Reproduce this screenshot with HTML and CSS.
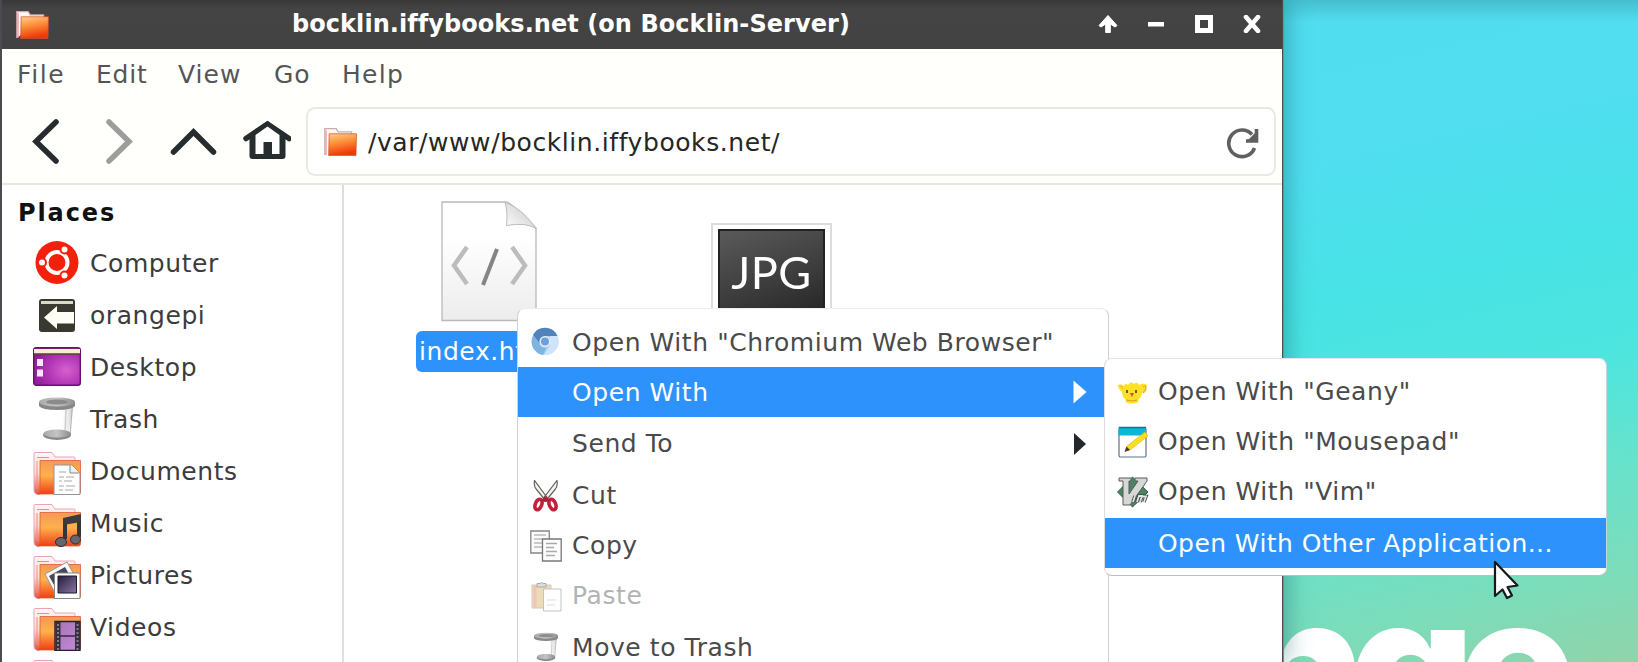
FILE: index.html
```
<!DOCTYPE html>
<html lang="en">
<head>
<meta charset="utf-8">
<title>bocklin.iffybooks.net (on Bocklin-Server)</title>
<link rel="stylesheet" href="styles.css">
</head>
<body>
<svg class="defs" width="0" height="0" aria-hidden="true">
  <defs>
    <linearGradient id="orange" x1="0" y1="0" x2="0.25" y2="1"><stop offset="0" stop-color="#ffd18a"/><stop offset=".5" stop-color="#fb8a35"/><stop offset="1" stop-color="#ee3a0a"/></linearGradient>
    <linearGradient id="orangeWide" x1="0" y1="0" x2="0" y2="1"><stop offset="0" stop-color="#f39a55"/><stop offset=".45" stop-color="#ffb04c"/><stop offset="1" stop-color="#ef3f16"/></linearGradient>
    <linearGradient id="folderBack" x1="0" y1="0" x2="0" y2="1"><stop offset="0" stop-color="#fff6f4"/><stop offset=".5" stop-color="#fbd8d8"/><stop offset="1" stop-color="#e2503f"/></linearGradient>
    <radialGradient id="purple" cx=".7" cy=".6" r=".8"><stop offset="0" stop-color="#d660cf"/><stop offset=".5" stop-color="#b035b5"/><stop offset="1" stop-color="#86188f"/></radialGradient>
    <linearGradient id="page" x1="0" y1="0" x2="0" y2="1"><stop offset=".3" stop-color="#fff"/><stop offset="1" stop-color="#ececec"/></linearGradient>
    <linearGradient id="curl" x1="0" y1="1" x2=".7" y2=".3"><stop offset="0" stop-color="#fff"/><stop offset="1" stop-color="#d4d4d4"/></linearGradient>
    <linearGradient id="metal" x1="0" y1="0" x2="1" y2="0"><stop offset="0" stop-color="#aaa"/><stop offset=".5" stop-color="#c4c4c4"/><stop offset="1" stop-color="#8d8d8d"/></linearGradient>
    <linearGradient id="glass" x1="0" y1="0" x2="1" y2="0"><stop offset="0" stop-color="#fff"/><stop offset=".6" stop-color="#fff"/><stop offset=".85" stop-color="#e8e8e8"/><stop offset="1" stop-color="#c4c4c4"/></linearGradient>
    <linearGradient id="film" x1="0" y1="0" x2="1" y2="1"><stop offset="0" stop-color="#a873b4"/><stop offset="1" stop-color="#c28ad8"/></linearGradient>
    <linearGradient id="photo" x1="0" y1="0" x2="1" y2="1"><stop offset="0" stop-color="#251c3c"/><stop offset="1" stop-color="#8b77a5"/></linearGradient>
    <symbol id="folder-small" viewBox="0 0 32 28">
      <path d="M.8 27V1.500h11l2 3.200h13V8" fill="#fff8f6" stroke="#cfa9a9" stroke-width="1.200"/>
      <path d="M2 27V3" stroke="#e88a8a" stroke-width="1"/>
      <path d="M5 6.500h26.500L31 27.500H4.500z" fill="url(#orange)" stroke="#d3502a" stroke-width=".7"/>
    </symbol>
    <symbol id="folder" viewBox="0 0 48 44">
      <path d="M1 38V1.500q0-1 1-1h17l3 4.500h19q1 0 1 1V10L6 42.500q-5 0-5-4.500z" fill="url(#folderBack)" stroke="#e5a7b8" stroke-width="1"/>
      <path d="M4 5.500h12M4 9v28" stroke="#f58f70" stroke-width="1" fill="none"/>
      <path d="M7 8.500h40.500V40q0 2-2 2H4q3-1 3-5z" fill="url(#orangeWide)" stroke="#df5a33" stroke-width=".8"/>
    </symbol>
    <symbol id="trash" viewBox="0 0 36 44">
      <path d="M9 8l-2 31h22L34 8z" fill="url(#glass)"/>
      <path d="M33.500 9L31 38" stroke="#b4b4b4" stroke-width="1.200"/>
      <path d="M27 12l-1 24" stroke="#d0d0d0" stroke-width="1.500"/>
      <ellipse cx="18" cy="38" rx="14" ry="5" fill="#888"/><ellipse cx="18" cy="36.500" rx="13.500" ry="4" fill="url(#metal)"/>
      <path d="M0 5h36v4q-3 4-18 4T0 9z" fill="#878787"/><ellipse cx="18" cy="5" rx="18" ry="4.500" fill="url(#metal)"/><ellipse cx="18" cy="5" rx="11" ry="2.500" fill="#8b8b8b"/>
    </symbol>
  </defs>
</svg>

<div class="desktop">
  <svg class="wallpaper-word" viewBox="0 0 356 60"><text x="-43 66 175" y="137">nge</text></svg>

  <main class="window">
    <header class="titlebar">
      <svg class="title-icon" viewBox="0 0 32 28"><use href="#folder-small"/></svg>
      <h1 class="title">bocklin.iffybooks.net (on Bocklin-Server)</h1>
      <div class="controls">
        <svg viewBox="0 0 20 18"><path d="M10 .5L19 10.500L17 12L12.300 9V17.500H7.700V9L3 12L1 10.500z" fill="#fff" stroke="#fff" stroke-linejoin="round"/></svg>
        <svg viewBox="0 0 20 18"><path d="M2 7h16v4.500H2z" fill="#fff"/></svg>
        <svg viewBox="0 0 20 18"><path d="M3.500 2.500h13v13h-13z" fill="none" stroke="#fff" stroke-width="5"/></svg>
        <svg viewBox="0 0 20 18"><path d="M4 2l12 14M16 2L4 16" fill="none" stroke="#fff" stroke-width="4.600" stroke-linecap="round"/></svg>
      </div>
    </header>

    <nav class="menubar"><span>File</span><span>Edit</span><span>View</span><span>Go</span><span>Help</span></nav>

    <div class="toolbar">
      <svg class="tool" viewBox="0 0 48 48"><path d="M33 5L13 24.500L33 44" class="chev"/></svg>
      <svg class="tool" viewBox="0 0 48 48"><path d="M12 5L32 24.500L12 44" class="chev chev-off"/></svg>
      <svg class="tool" viewBox="0 0 48 48"><path d="M4.500 35L24.500 15L44.500 35" class="chev"/></svg>
      <svg class="tool" viewBox="0 0 48 48"><path d="M3 21.500L24.500 7L46 21.500" fill="none" stroke="#272c2e" stroke-width="5.500" stroke-linecap="round"/><path d="M6.500 17L24.500 4l18 13v22q0 3-3 3h-30q-3 0-3-3z" fill="#272c2e"/><path d="M12.500 18L24.500 9.500l12 8.500v19h-7.500V25h-8.500v12h-8z" fill="#fff"/></svg>
      <div class="pathbar">
        <svg class="path-icon" viewBox="0 0 32 28"><use href="#folder-small"/></svg>
        <span>/var/www/bocklin.iffybooks.net/</span>
        <svg class="reload" viewBox="0 0 34 34"><path d="M27 9.500A13.300 13.300 0 1 0 29.500 23" fill="none" stroke="#606060" stroke-width="3.600"/><path d="M31.500 4v12H21" fill="none" stroke="#606060" stroke-width="3.600"/><path d="M30 15V8l-7 7z" fill="#606060"/></svg>
      </div>
    </div>

    <div class="content">
      <aside class="sidebar">
        <h2>Places</h2>
        <ul>
          <li><svg viewBox="0 0 48 48"><circle cx="24" cy="23.500" r="21.500" fill="#f5200c"/><g fill="none" stroke="#fff" stroke-width="4"><circle cx="24" cy="23.500" r="10.500"/></g><g stroke="#f5200c" stroke-width="2"><circle cx="9" cy="23.500" r="4" fill="#fff"/><circle cx="31.500" cy="10.500" r="4" fill="#fff"/><circle cx="31.500" cy="36.500" r="4" fill="#fff"/></g></svg>Computer</li>
          <li><svg viewBox="0 0 48 48"><rect x="6" y="8" width="36" height="33" rx="3" fill="#393932"/><path d="M8 10h32v3H8z" fill="#d9d9c8"/><path d="M11 26.500L24 15v6h17v11.500H24V38z" fill="#fffef4"/></svg>orangepi</li>
          <li><svg viewBox="0 0 48 48"><rect x=".7" y="4.700" width="46.600" height="37.600" rx="2.500" fill="url(#purple)" stroke="#65136c" stroke-width="1.400"/><path d="M1 6h46v5H1z" fill="#f4f0cc"/><path d="M1 11h46" stroke="#52472e" stroke-width="1.400"/><path d="M4 16h6v7H4zM4 26.500h6v7H4z" fill="#fbe8ff"/></svg>Desktop</li>
          <li><svg viewBox="-6 -2 48 48"><use href="#trash" width="36" height="44"/></svg>Trash</li>
          <li><svg viewBox="0 -5 48 48"><use href="#folder" width="48" height="44"/><path d="M21 13h18l8 8v21.500H21z" fill="#fdfdfd" stroke="#949494"/><path d="M37 13v8h9" fill="#eee" stroke="#888"/><path d="M26 20h7M26 25h5M33 25h8M26 29h3M31 29h8M26 34h5M33 34h9M26 38h4M32 38h8" stroke="#aaa" stroke-width="1"/></svg>Documents</li>
          <li><svg viewBox="0 -5 48 48"><use href="#folder" width="48" height="44"/><path d="M32 15v20M46 12v21" stroke="#34343b" stroke-width="4"/><path d="M30 14l18-4v8l-18 3z" fill="#3b3b40"/><ellipse cx="28" cy="38" rx="5.500" ry="4.500" fill="#65656b" stroke="#2d2d31"/><ellipse cx="42.500" cy="35.500" rx="5" ry="4.500" fill="#65656b" stroke="#2d2d31"/></svg>Music</li>
          <li><svg viewBox="0 -5 48 48"><use href="#folder" width="48" height="44"/><path d="M12 18L34 6l10 18-22 13z" fill="#f8f8f8" stroke="#999"/><path d="M16 20L32 11l5 9-16 9z" fill="#47495a"/><path d="M21.500 17H47v25.500H21.500z" fill="#fff" stroke="#888"/><path d="M25 20h18.500v17H25z" fill="url(#photo)" stroke="#1e1b2b" stroke-width="1"/></svg>Pictures</li>
          <li><svg viewBox="0 -5 48 48"><use href="#folder" width="48" height="44"/><path d="M22 13.500h25v29H22z" fill="url(#film)" stroke="#25202b" stroke-width="1.400"/><path d="M25 14v28M44.500 14v28" stroke="#35303b" stroke-width="5"/><path d="M25 16v26M44.500 16v26" stroke="#857a90" stroke-width="2" stroke-dasharray="2 2"/><path d="M27 28h15" stroke="#352b40" stroke-width="1.500"/></svg>Videos</li>
          <li><svg viewBox="0 -5 48 48"><use href="#folder" width="48" height="44"/></svg></li>
        </ul>
      </aside>

      <section class="files">
        <figure class="file">
          <svg class="html-icon" viewBox="0 0 97 121"><path d="M1 1h64q5 0 30 26v92.500H1z" fill="url(#page)" stroke="#b9b9b9" stroke-width="1.300"/><path d="M64 1q3 10 1.500 23.500Q85 21 95 27.500Q82 8 64 1z" fill="url(#curl)" stroke="#bbb" stroke-width="1"/><path d="M26 46L13 64.500L26 83M71 46L84 64.500L71 83" fill="none" stroke="#bcbcbc" stroke-width="4.500"/><path d="M56 48L42 84" stroke="#858585" stroke-width="4"/></svg>
          <figcaption class="selected">index.html</figcaption>
        </figure>
        <figure class="picture"><div class="jpg"><span>JPG</span></div></figure>
      </section>
    </div>
  </main>

  <ul class="menu context">
    <li><svg viewBox="0 0 32 32"><circle cx="15" cy="15.500" r="13.500" fill="#a7cdf0"/><path d="M3 9A13.500 13.500 0 0 1 27.500 10H15.500A6 6 0 0 0 10 18z" fill="#5083bb"/><path d="M3.500 9L10 19A6.500 6.500 0 0 0 16 22L13 29A13.500 13.500 0 0 1 3.500 9z" fill="#7db4e0"/><path d="M27.500 10A13.500 13.500 0 0 1 14 29l6-10V10z" fill="#cfe4fa"/><circle cx="15" cy="15.500" r="5.500" fill="#e1edfb"/><circle cx="15" cy="15.500" r="4" fill="#6c9fdb"/></svg>Open With "Chromium Web Browser"</li>
    <li class="active"><i></i>Open With<svg class="arrow" viewBox="0 0 14 24"><path d="M.5.500L13.500 12L.5 23.500z" fill="#fff"/></svg></li>
    <li class="tall"><i></i>Send To<svg class="arrow" viewBox="0 0 14 24"><path d="M1 1L13 12L1 23z" fill="#25282b"/></svg></li>
    <li><svg viewBox="0 0 32 32"><path d="M4.500.500q-1 6 2 9L15 20l2-2.500zM27 .5q1 6-2 9L16.500 20 14 17.500z" fill="#f4f4ef" stroke="#62625c" stroke-width="1.200"/><ellipse cx="8.500" cy="24.500" rx="3.200" ry="5.500" transform="rotate(22 8.500 24.500)" fill="none" stroke="#c2203c" stroke-width="3.600"/><ellipse cx="22.500" cy="24.500" rx="3.200" ry="5.500" transform="rotate(-22 22.500 24.500)" fill="none" stroke="#c2203c" stroke-width="3.600"/><path d="M10 21l5.500-5 5.500 5-5.500 1z" fill="#b51e35"/></svg>Cut</li>
    <li><svg viewBox="0 0 32 32"><path d="M.8 1h18.500v22H.8z" fill="#fafafa" stroke="#868686" stroke-width="1.300"/><path d="M4 5h12M4 9h8M4 13h9M4 17h8" stroke="#bbb" stroke-width="1.300"/><path d="M12.500 9h18.700v22H12.500z" fill="#fdfdfd" stroke="#777" stroke-width="1.300"/><path d="M16 13.500h11M16 17.500h8M16 21.500h11M16 25.500h9" stroke="#aaa" stroke-width="1.300"/></svg>Copy</li>
    <li class="off"><svg viewBox="0 0 32 32"><path d="M2 5h19v23H2z" fill="#eadcb7" stroke="#dbc7b4"/><path d="M5 6v21" stroke="#f0c3b8" stroke-width="3"/><path d="M7 7V3.500h3.500q1-3 2.500 0H16V7z" fill="#ddd" stroke="#aaa"/><path d="M13.500 9h17.500v22H13.500z" fill="#fefefe" stroke="#c4c4c4"/><path d="M17 20h9M17 25h8" stroke="#ddd"/></svg>Paste</li>
    <li class="tall"><svg viewBox="0 0 32 32"><use href="#trash" x="4" y="0" width="24" height="32"/></svg>Move to Trash</li>
  </ul>

  <ul class="menu submenu">
    <li><svg viewBox="0 0 32 32"><path d="M1 9q3-2 6 1 1-4 4-1 3-5 6-1 3-3 5 1 5-3 8 0-1 6-5 8-1 5-4 7 1 3-2 3-5 1-9 0-2-1-1-3-4-3-4-8Q1 13 1 9z" fill="#fbe128"/><path d="M26 11q3-2 3 1 0 3-3 5" fill="none" stroke="#f6ae2b" stroke-width="1.300"/><path d="M3 10q2 0 3 3" fill="none" stroke="#f6ae2b"/><path d="M10 14v3M19 14v3" stroke="#7d5a1a" stroke-width="2"/><path d="M13 17h4l-2 4z" fill="#dc462d"/><path d="M9 24q6 2 11 0" stroke="#e3982b" fill="none"/></svg>Open With "Geany"</li>
    <li><svg viewBox="0 0 32 32"><rect x="2" y="1.500" width="27" height="29.500" rx="1.500" fill="#fff" stroke="#5f7387" stroke-width="1.200"/><path d="M1.500 1.500H29v8H1.500z" fill="#0bb7d7"/><path d="M2 1.500h27" stroke="#08798e" stroke-width="1.500"/><path d="M8 25l2-5L28 6l3 4-18 14z" fill="#fbdf1e" stroke="#d3b414" stroke-width=".6"/><path d="M7.500 26l2-5.500 3.500 3.500z" fill="#55334b"/></svg>Open With "Mousepad"</li>
    <li><svg viewBox="0 0 32 32"><path d="M15.500 1L31 16 15.500 31 .5 16z" fill="#4d8265" stroke="#355c49"/><path d="M2 2h12v3h-2v13L21 5h-3V2h12v3L13 29H6V5H2z" fill="#d5d8d5" stroke="#5a5a5a" stroke-width="1"/><path d="M16 26l2-6M20 26l2-6h3l-2 6M25 20.500h4l-2 5.500" fill="none" stroke="#3b4b43" stroke-width="3.500"/><path d="M16 26l2-6M20 26l2-6h3l-2 6M25 20.500h4l-2 5.500" fill="none" stroke="#e4e4e4" stroke-width="1.800"/></svg>Open With "Vim"</li>
    <li class="active last"><i></i>Open With Other Application...</li>
  </ul>

  <svg class="cursor" viewBox="0 0 26 40"><path d="M2 2V36L9.500 29.500L14 38L19 35.500L14.500 27L24.500 25.500z" fill="#fff" stroke="#16191b" stroke-width="2.200" stroke-linejoin="round"/></svg>
</div>
</body>
</html>
```
FILE: styles.css
```
* { box-sizing: border-box; }
body { margin: 0; font-family: "DejaVu Sans", sans-serif; font-size: 25px; letter-spacing: .57px; color: #3c3c3c; }
svg { display: block; flex: none; }
ul { list-style: none; margin: 0; padding: 0; }
.defs { position: absolute; }

.desktop {
  position: relative;
  width: 1638px;
  height: 662px;
  overflow: hidden;
  background:
    linear-gradient(180deg, rgba(40, 110, 120, .28), rgba(40, 110, 120, 0) 22px),
    linear-gradient(167deg, #50ddf0 0%, #50def0 45%, #48e3e6 58%, #4ee5de 70%, #66e2cb 80%, #7cdcba 91%, #90d3a9 100%);
}
.wallpaper-word { position: absolute; left: 1282px; top: 602px; width: 356px; height: 60px; }
.wallpaper-word text { font: 800 200px Inter, sans-serif; letter-spacing: 0; fill: #fff; }

.window {
  position: relative;
  display: flex;
  flex-direction: column;
  width: 1283px;
  height: 662px;
  overflow: visible;
  border: solid #4b4b50;
  border-width: 0 1px 0 2px;
  background: #fff;
  box-shadow: 1px 0 0 #45a78c, 4px 0 22px rgba(20, 90, 100, .42);
}

.titlebar { display: flex; align-items: center; height: 49px; flex: none; background: linear-gradient(#393939, #444 20%, #424242); }
.title-icon { width: 33px; height: 29px; margin: 0 0 1px 14px; }
.title { flex: 1; margin: 0 0 0 243px; padding-bottom: 2px; font-size: 24px; line-height: 30px; font-weight: bold; letter-spacing: .06px; color: #fff; white-space: nowrap; }
.controls { display: flex; gap: 28px; margin: 0 20px 2px 0; }
.controls svg { width: 20px; height: 18px; }

.menubar { display: flex; height: 49px; flex: none; align-items: center; padding-left: 15px; background: #fffffb; color: #555; letter-spacing: 1px; }
.menubar span { line-height: 49px; padding-top: 2px; width: 79px; }
.menubar span:nth-child(1) { letter-spacing: 1.600px; }
.menubar span:nth-child(2) { width: 82px; letter-spacing: .8px; }
.menubar span:nth-child(3) { width: 96px; }
.menubar span:nth-child(4) { width: 68px; }
.menubar span:nth-child(5) { letter-spacing: 1.300px; }

.toolbar { display: flex; align-items: center; height: 87px; flex: none; padding: 2px 6px 0 21px; border-bottom: 2px solid #eae7e0; background: #fffffb; }
.tool { width: 48px; height: 48px; margin: 0 26px 2px 0; }
.tool:nth-child(2) { margin-right: 24px; }
.tool:nth-child(4) { margin-right: 15px; }
.chev { fill: none; stroke: #272c2e; stroke-width: 5.500; stroke-linecap: round; }
.chev-off { stroke: #9d9d9d; }
.pathbar { display: flex; flex: 1; align-items: center; height: 69px; padding: 0 15px 0 16px; border: 2px solid #ebe9e2; border-radius: 9px; background: #fff; color: #262626; }
.pathbar span { padding-top: 2px; }
.path-icon { width: 33px; height: 29px; margin: 0 11px 0 0; }
.reload { width: 34px; height: 34px; margin-left: auto; }

.content { display: flex; flex: 1; min-height: 0; }
.sidebar { width: 342px; height: 477px; overflow: hidden; border-right: 2px solid #dedede; flex: none; }
.sidebar h2 { margin: 0; height: 52px; padding: 6px 0 0 16px; font-size: 24px; line-height: 45px; letter-spacing: 1.900px; color: #111; }
.sidebar li { display: flex; align-items: center; gap: 9px; height: 52px; padding-left: 31px; }
.sidebar svg { width: 48px; height: 48px; }

.files { display: flex; }
.file { margin: 16px 0 0 72px; width: 146px; }
.html-icon { width: 97px; height: 121px; margin-left: 25px; }
.selected { height: 41px; margin-top: 9px; padding-left: 3px; border-radius: 6px; background: #2d92fb; color: #fff; line-height: 42px; }
.picture { margin: 38px 0 0 149px; padding: 4px 5px; width: 121px; height: 116px; border: 2px solid #dcdcdc; background: #fff; }
.jpg { display: flex; justify-content: center; height: 104px; overflow: hidden; border: 2px solid #222; background: linear-gradient(160deg, #5a5a5a, #3a3a3a 55%, #1e1e1e); }
.jpg span { margin-top: 17px; font: 45px/48px Lato, sans-serif; letter-spacing: .5px; color: #fff; -webkit-box-reflect: below -14px linear-gradient(transparent 45%, rgba(255, 255, 255, .4)); }

.menu { position: absolute; background: #fff; border: 1px solid #d0d0d0; border-radius: 8px; color: #4a4a4a; white-space: nowrap; }
.menu li { display: flex; align-items: center; gap: 10px; height: 50px; }
.menu li > svg:first-child, .menu i { width: 32px; height: 32px; flex: none; }
.menu .active { background: #2d92fb; color: #fff; }
.menu .off { color: #b3b3b3; }
.context { left: 517px; top: 308px; width: 592px; height: 380px; padding-top: 8px; border-top-color: #ececec; }
.context li { padding: 0 21px 0 12px; }
.context .tall { height: 53px; }
.context .tall ~ li { padding-top: 1px; }
.menu .arrow { width: 14px; height: 24px; margin-left: auto; }
.submenu { left: 1104px; top: 358px; width: 503px; height: 218px; padding-top: 8px; border-color: #e4e4e4 #c8d8d4 #b9c4c0 #ddd; }
.submenu li { padding: 0 0 1px 12px; gap: 9px; }
.submenu .active { letter-spacing: .43px; margin-top: 1px; padding: 1px 0 0 12px; }

.cursor { position: absolute; left: 1493px; top: 560px; width: 26px; height: 40px; }
```
